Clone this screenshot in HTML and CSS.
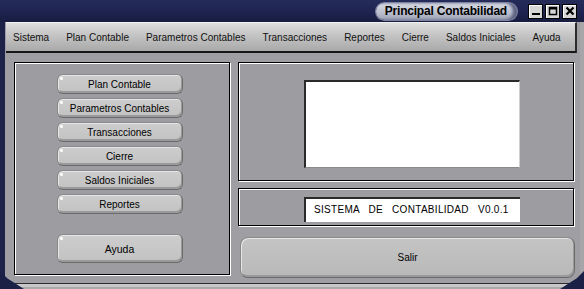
FILE: index.html
```html
<!DOCTYPE html>
<html lang="es">
<head>
    <meta charset="UTF-8">
    <meta name="viewport" content="width=device-width, initial-scale=1.0">
    <title>Principal Contabilidad</title>
    <link rel="stylesheet" href="styles.css">
</head>
<body>
    <div class="window">
        <div class="titlebar">
            <span class="title-pill">Principal Contabilidad</span>
            <div class="controls">
                <span class="ctl">
                    <svg width="12" height="12" viewBox="0 0 12 12"><rect x="2" y="8" width="8" height="2" fill="#000"/></svg>
                </span>
                <span class="ctl">
                    <svg width="12" height="12" viewBox="0 0 12 12"><rect x="2.5" y="2.5" width="7" height="7" fill="none" stroke="#000" stroke-width="1.5"/><rect x="2" y="2" width="8" height="2.5" fill="#000"/></svg>
                </span>
                <span class="ctl">
                    <svg width="12" height="12" viewBox="0 0 12 12"><path d="M2.5 2.5 L9.5 9.5 M9.5 2.5 L2.5 9.5" stroke="#000" stroke-width="2.2"/></svg>
                </span>
            </div>
        </div>

        <div class="menubar">
            <span class="menu-item">Sistema</span>
            <span class="menu-item">Plan Contable</span>
            <span class="menu-item">Parametros Contables</span>
            <span class="menu-item">Transacciones</span>
            <span class="menu-item">Reportes</span>
            <span class="menu-item">Cierre</span>
            <span class="menu-item">Saldos Iniciales</span>
            <span class="menu-item">Ayuda</span>
        </div>

        <div class="content">
            <div class="panel left-panel">
                <button class="btn">Plan Contable</button>
                <button class="btn">Parametros Contables</button>
                <button class="btn">Transacciones</button>
                <button class="btn">Cierre</button>
                <button class="btn">Saldos Iniciales</button>
                <button class="btn">Reportes</button>
                <button class="btn btn-help">Ayuda</button>
            </div>

            <div class="right-col">
                <div class="panel top-panel">
                    <div class="screen"></div>
                </div>
                <div class="panel version-panel">
                    <div class="version">SISTEMA DE CONTABILIDAD V0.0.1</div>
                </div>
                <button class="btn btn-exit">Salir</button>
            </div>
        </div>

        <div class="bottom-edge">
            <span class="corner corner-left"></span>
            <span class="corner corner-right"></span>
        </div>
    </div>
</body>
</html>
```

FILE: styles.css
```css
* {
    margin: 0;
    padding: 0;
    box-sizing: border-box;
}

body {
    width: 584px;
    height: 289px;
    overflow: hidden;
    background: #9f9ea3;
    font-family: 'Liberation Sans', Arial, sans-serif;
}

.window {
    position: relative;
    width: 584px;
    height: 289px;
    display: flex;
    flex-direction: column;
    background: #9f9ea3;
    border-left: 5px solid #1d2248;
    border-right: 4px solid #a6a6a8;
}

/* barra de titulo */
.titlebar {
    height: 22px;
    margin: 0 -4px 0 -5px;
    background: linear-gradient(#262c5a, #1e2350 55%, #181c40);
    display: flex;
    align-items: center;
    justify-content: flex-end;
    padding-right: 7px;
}

.title-pill {
    height: 17px;
    padding: 0 10px 0 9px;
    border-radius: 9px;
    background: linear-gradient(#dadde6, #b8bccb 60%, #9ea3b6);
    box-shadow: inset -4px 0 3px #5c6280, 0 0 0 1px #7c82a0;
    font-size: 12px;
    font-weight: bold;
    letter-spacing: -0.2px;
    line-height: 17px;
    color: #000;
}

.controls {
    display: flex;
    gap: 2px;
    margin-left: 11px;
}

.ctl {
    width: 15px;
    height: 15px;
    display: flex;
    align-items: center;
    justify-content: center;
    background: #d6d6d6;
    border: 1px solid #000;
    box-shadow: inset 1px 1px 0 #fff;
}

/* menu */
.menubar {
    height: 31px;
    margin-left: 1px;
    margin-right: 3px;
    display: flex;
    align-items: center;
    gap: 17px;
    padding-left: 7px;
    padding-top: 1px;
    background: linear-gradient(#dedede, #c6c6c6 40%, #a9a9a9);
    border-top: 1px solid #f2f2f2;
    border-bottom: 2px solid #151515;
    border-right: 2px solid #2a2a2a;
    font-size: 10px;
    color: #111;
}

.content {
    display: grid;
    grid-template-columns: 216px 336px;
    gap: 8px;
    padding: 9px 0 0 9px;
}

.panel {
    border: 1px solid #000;
    box-shadow: 1px 1px 0 #fff, inset 1px 1px 0 #fff;
    background: #9d9ca1;
}

.left-panel {
    height: 213px;
    display: flex;
    flex-direction: column;
    align-items: center;
    gap: 4px;
    padding: 11px 5px 0 0;
}

.btn {
    position: relative;
    width: 126px;
    height: 20px;
    border: 1px solid #6a6a6a;
    border-top-color: #8a8a8a;
    border-left-color: #888;
    border-radius: 6px;
    background: linear-gradient(#cdcdcd, #c2c2c2);
    box-shadow: inset 1px 1px 0 #e6e6e6, inset -1px -2px 0 #9a9a9a;
    font-family: 'Liberation Sans', Arial, sans-serif;
    font-size: 10px;
    color: #000;
}

.btn::before {
    content: "";
    position: absolute;
    left: 2px;
    top: 2px;
    width: 3px;
    height: 3px;
    border-radius: 50%;
    background: #fff;
}

.btn-help {
    height: 29px;
    margin-top: 16px;
    font-size: 10.5px;
}

.right-col {
    display: flex;
    flex-direction: column;
}

.top-panel {
    height: 119px;
    padding: 17px 0 0 65px;
}

.screen {
    width: 216px;
    height: 88px;
    background: #fff;
    border-top: 2px solid #2a2a2a;
    border-left: 2px solid #2a2a2a;
    border-bottom: 1px solid #8a8a8a;
    border-right: 1px solid #cfcfcf;
}

.version-panel {
    height: 38px;
    margin-top: 7px;
    padding: 8px 0 0 65px;
}

.version {
    width: 216px;
    height: 25px;
    background: #fff;
    border-top: 2px solid #2a2a2a;
    border-left: 2px solid #2a2a2a;
    font-size: 10px;
    line-height: 22px;
    letter-spacing: 0.3px;
    word-spacing: 6px;
    padding-left: 8px;
    color: #000;
}

.btn-exit {
    width: 335px;
    height: 41px;
    margin-top: 11px;
    margin-left: 2px;
    border-radius: 8px;
    background: linear-gradient(#c4c4c4, #b9b9b9);
    font-size: 10px;
}

.btn-exit::before {
    display: none;
}

.bottom-edge {
    position: relative;
    margin-top: auto;
    height: 6px;
    margin-left: -5px;
    margin-right: -4px;
    border-top: 1px solid #2c2c2c;
    background: #a9a9ab;
    box-shadow: inset 0 3px 0 #c8c8c8;
}

.corner {
    position: absolute;
    bottom: 0;
    width: 24px;
    height: 18px;
    background: #1b2046;
}

.corner-left {
    left: 0;
    clip-path: polygon(0 0, 30% 40%, 100% 100%, 0 100%);
}

.corner-right {
    right: 0;
    clip-path: polygon(100% 0, 100% 100%, 0 100%, 70% 40%);
}
```
